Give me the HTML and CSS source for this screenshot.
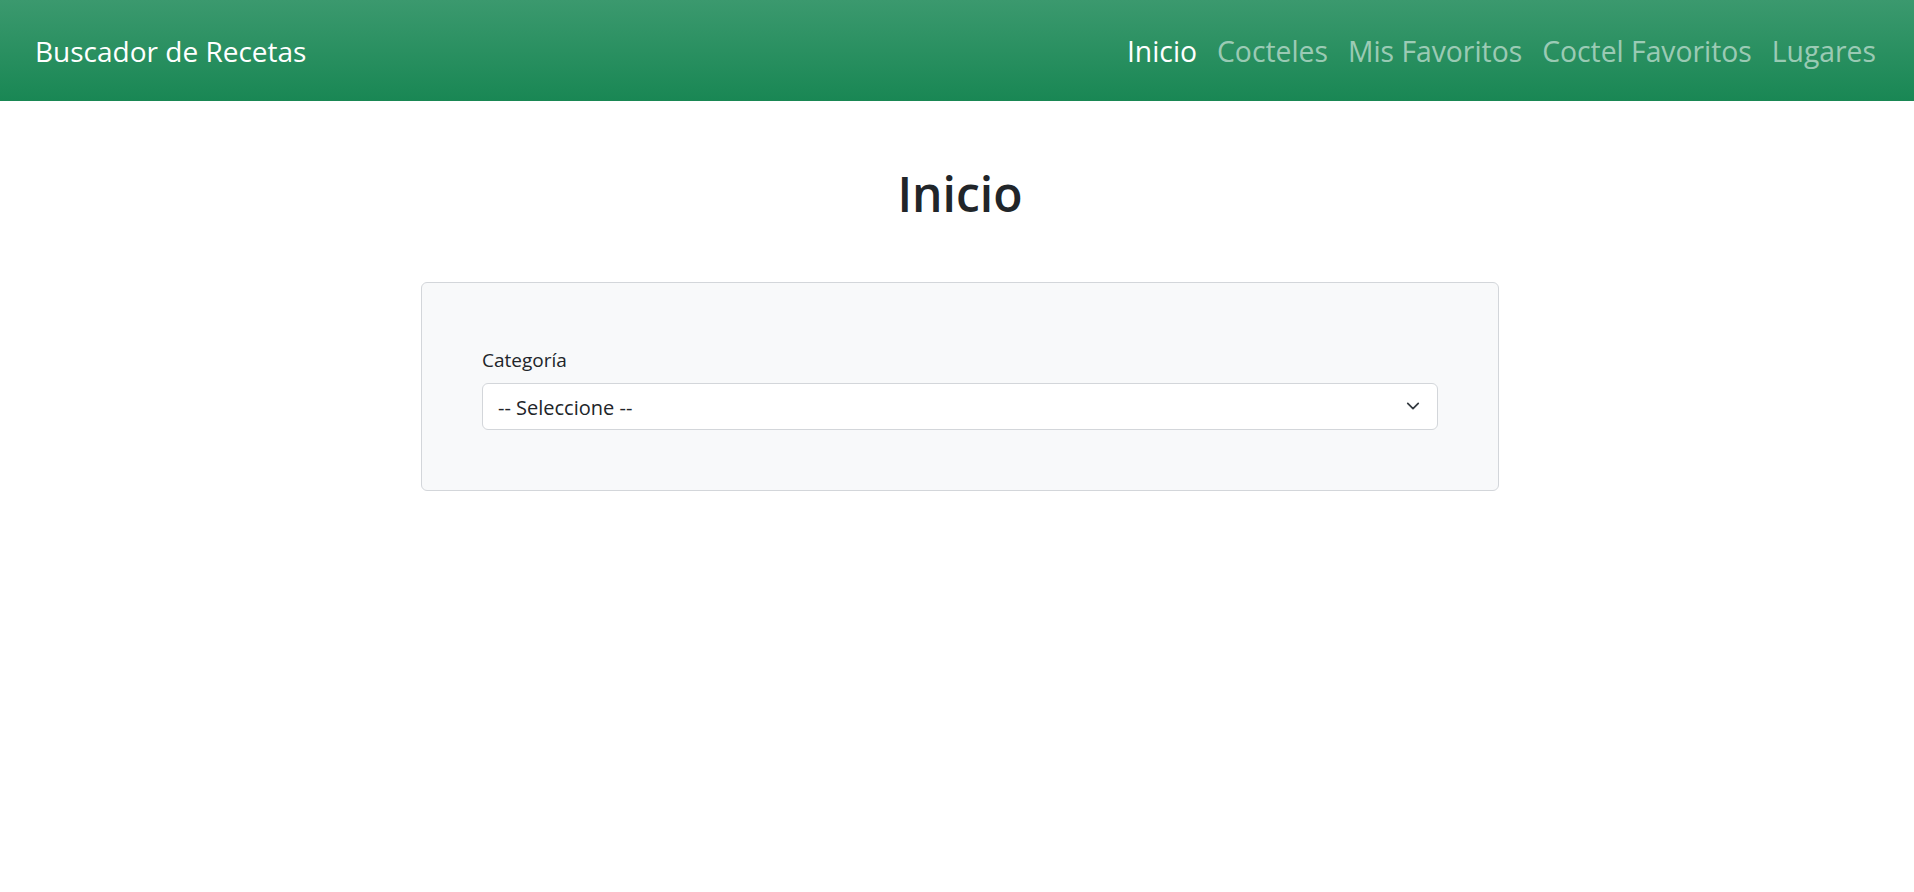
FILE: index.html
```html
<!DOCTYPE html>
<html lang="es">
<head>
<meta charset="utf-8">
<title>Buscador de Recetas</title>
<link rel="stylesheet" href="styles.css">
</head>
<body>
<nav class="navbar">
  <a class="brand" href="#">Buscador de Recetas</a>
  <ul class="nav-links">
    <li><a class="nav-link active" href="#">Inicio</a></li>
    <li><a class="nav-link" href="#">Cocteles</a></li>
    <li><a class="nav-link" href="#">Mis Favoritos</a></li>
    <li><a class="nav-link" href="#">Coctel Favoritos</a></li>
    <li><a class="nav-link" href="#">Lugares</a></li>
  </ul>
</nav>
<main class="main">
  <h1 class="title">Inicio</h1>
  <form class="search-card">
    <label class="form-label" for="categoria">Categoría</label>
    <div class="select-wrap">
      <select class="form-select" id="categoria">
        <option>-- Seleccione --</option>
      </select>
      <svg class="chevron" viewBox="0 0 16 16" width="14" height="14" aria-hidden="true"><path fill="none" stroke="#343a40" stroke-linecap="round" stroke-linejoin="round" stroke-width="2" d="m2 5 6 6 6-6"/></svg>
    </div>
  </form>
</main>
</body>
</html>
```
FILE: styles.css
```css
* { box-sizing: border-box; }
html, body { margin: 0; padding: 0; }
body {
  font-family: "Open Sans", "Noto Sans", sans-serif;
  font-size: 19px;
  color: #212529;
  background: #fff;
}
.navbar {
  height: 101px;
  display: flex;
  align-items: center;
  justify-content: space-between;
  padding: 2px 28px 0 35px;
  background: linear-gradient(180deg, #3b996e 0%, #198754 100%);
}
.brand {
  color: #fff;
  text-decoration: none;
  font-size: 28px;
  line-height: 1.3;
}
.nav-links {
  list-style: none;
  display: flex;
  margin: 0;
  padding: 0;
}
.nav-link {
  display: block;
  padding: 0 10px;
  font-size: 28.3px;
  line-height: 1.3;
  color: rgba(255, 255, 255, 0.55);
  text-decoration: none;
}
.nav-link.active { color: #fff; }
.main {
  padding-left: 6px;
}
.title {
  margin: 64px 0 0;
  text-align: center;
  font-size: 48px;
  line-height: 1.2;
  font-weight: 600;
  color: #212529;
}
.search-card {
  width: 1078px;
  margin: 59px auto 0;
  padding: 60px;
  background: #f8f9fa;
  border: 1px solid #d3d6da;
  border-radius: 6px;
}
.form-label {
  display: block;
  font-size: 19px;
  line-height: 30px;
  padding-top: 2px;
  margin-bottom: 8px;
}
.select-wrap {
  position: relative;
}
.form-select {
  display: block;
  width: 100%;
  height: 47px;
  padding: 2px 50px 0 15px;
  font-family: inherit;
  font-size: 20px;
  color: #212529;
  background: #fff;
  border: 1px solid #d3d6da;
  border-radius: 6px;
  appearance: none;
  -webkit-appearance: none;
  outline: none;
}
.chevron {
  position: absolute;
  right: 18px;
  top: 16px;
  pointer-events: none;
}
```
